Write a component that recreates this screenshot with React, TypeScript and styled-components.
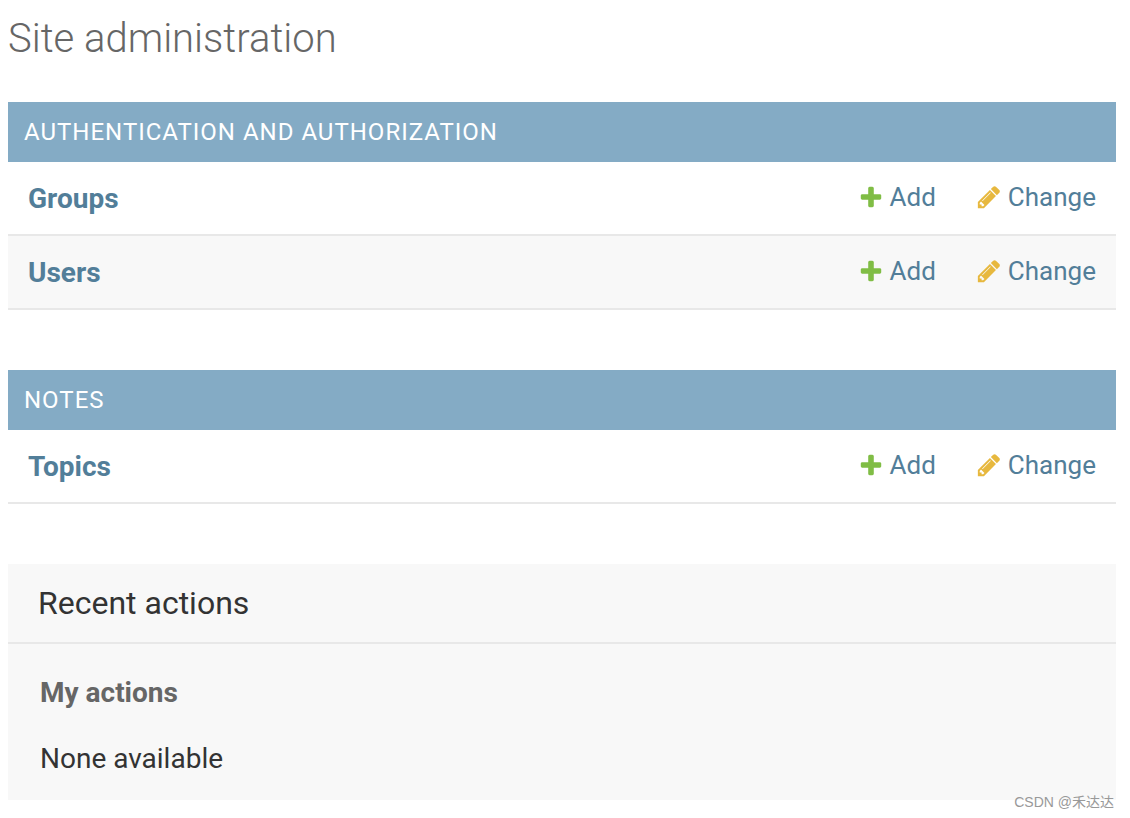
import React from "react";
import styled, { createGlobalStyle } from "styled-components";

const colors = {
  header: "#84abc5",
  link: "#527e99",
  text: "#333333",
  quiet: "#666666",
  line: "#e8e8e8",
  shade: "#f8f8f8",
  add: "#80bd45",
  change: "#e7b83e",
};

const GlobalStyle = createGlobalStyle`
  *, *::before, *::after {
    box-sizing: border-box;
  }
  body {
    margin: 0;
    background: #ffffff;
    color: ${colors.text};
    font-family: Roboto, "Liberation Sans", "Noto Sans CJK SC", sans-serif;
    font-size: 28px;
  }
`;

const Page = styled.main`
  position: relative;
  padding: 14px 14px 18px 8px;
`;

const PageTitle = styled.h1`
  margin: 0 0 38px;
  color: ${colors.quiet};
  font-size: 40px;
  font-weight: 300;
  line-height: 50px;
`;

const ModuleTable = styled.table`
  width: 100%;
  margin-bottom: 60px;
  border-collapse: separate;
  border-spacing: 0;
`;

const ModuleCaption = styled.caption`
  padding: 16px;
  background: ${colors.header};
  color: #ffffff;
  font-size: 24px;
  font-weight: 400;
  letter-spacing: 1px;
  line-height: 28px;
  text-align: left;
  text-transform: uppercase;
`;

const ModelRow = styled.tr`
  &:nth-child(even) {
    background: ${colors.shade};
  }
`;

const ModelName = styled.th`
  width: 100%;
  padding: 21px 20px 19px;
  border-bottom: 2px solid ${colors.line};
  font-size: 28px;
  font-weight: 700;
  line-height: 32px;
  text-align: left;
  vertical-align: top;
`;

const ActionCell = styled.td`
  padding: 19px 20px 21px;
  border-bottom: 2px solid ${colors.line};
  line-height: 32px;
  white-space: nowrap;
  vertical-align: top;
`;

const Link = styled.a`
  color: ${colors.link};
  text-decoration: none;
`;

const ActionLink = styled(Link)`
  display: flex;
  align-items: center;
  gap: 6px;
  font-size: 26px;
`;

const Icon = styled.svg`
  flex: none;
  width: 26px;
  height: 26px;
`;

const RecentActions = styled.section`
  background: ${colors.shade};
`;

const RecentTitle = styled.h2`
  margin: 0;
  padding: 20px 30px;
  border-bottom: 2px solid ${colors.line};
  font-size: 32px;
  font-weight: 400;
  line-height: 38px;
`;

const RecentBody = styled.div`
  padding: 32px 32px 24px;
`;

const RecentSubtitle = styled.h3`
  margin: 0 0 32px;
  color: ${colors.quiet};
  font-size: 28px;
  font-weight: 700;
  line-height: 34px;
`;

const EmptyNote = styled.p`
  margin: 0;
  font-size: 28px;
  line-height: 34px;
`;

const Watermark = styled.small`
  position: absolute;
  right: 16px;
  bottom: 6px;
  color: #999999;
  font-family: "Liberation Sans", "Noto Sans CJK SC", sans-serif;
  font-size: 14px;
  line-height: 20px;
`;

function AddIcon() {
  return (
    <Icon viewBox="0 0 1792 1792" aria-hidden="true">
      <path
        fill={colors.add}
        d="M1600 796v192q0 40-28 68t-68 28h-416v416q0 40-28 68t-68 28h-192q-40 0-68-28t-28-68v-416h-416q-40 0-68-28t-28-68v-192q0-40 28-68t68-28h416v-416q0-40 28-68t68-28h192q40 0 68 28t28 68v416h416q40 0 68 28t28 68z"
      />
    </Icon>
  );
}

function ChangeIcon() {
  return (
    <Icon viewBox="0 0 1792 1792" aria-hidden="true">
      <path
        fill={colors.change}
        d="M491 1536l91-91-235-235-91 91v107h128v128h107zm523-928q0-22-22-22-10 0-17 7l-542 542q-7 7-7 17 0 22 22 22 10 0 17-7l542-542q7-7 7-17zm-54-192l416 416-832 832h-416v-416zm683 96q0 53-37 90l-166 166-416-416 166-165q36-38 90-38 53 0 91 38l235 234q37 39 37 91z"
      />
    </Icon>
  );
}

function AppModule({ name, models }: { name: string; models: string[] }) {
  return (
    <ModuleTable>
      <ModuleCaption>{name}</ModuleCaption>
      <tbody>
        {models.map((model) => (
          <ModelRow key={model}>
            <ModelName scope="row">
              <Link href="#">{model}</Link>
            </ModelName>
            <ActionCell>
              <ActionLink href="#">
                <AddIcon />
                Add
              </ActionLink>
            </ActionCell>
            <ActionCell>
              <ActionLink href="#">
                <ChangeIcon />
                Change
              </ActionLink>
            </ActionCell>
          </ModelRow>
        ))}
      </tbody>
    </ModuleTable>
  );
}

export default function App() {
  return (
    <>
      <GlobalStyle />
      <Page>
        <PageTitle>Site administration</PageTitle>
        <AppModule name="Authentication and Authorization" models={["Groups", "Users"]} />
        <AppModule name="Notes" models={["Topics"]} />
        <RecentActions>
          <RecentTitle>Recent actions</RecentTitle>
          <RecentBody>
            <RecentSubtitle>My actions</RecentSubtitle>
            <EmptyNote>None available</EmptyNote>
          </RecentBody>
        </RecentActions>
        <Watermark>CSDN @禾达达</Watermark>
      </Page>
    </>
  );
}
